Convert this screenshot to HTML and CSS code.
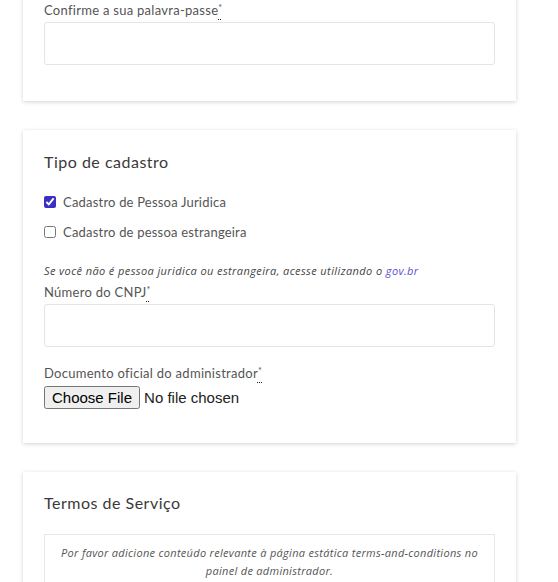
FILE: index.html
```html
<!DOCTYPE html>
<html lang="pt">
<head>
<meta charset="utf-8">
<link rel="stylesheet" href="styles.css">
</head>
<body>
<div class="page">
  <section class="card card-first">
    <div class="field">
      <label class="label">Confirme a sua palavra-passe<abbr title="obrigatório">*</abbr></label>
      <input class="text-input" type="password">
    </div>
  </section>

  <section class="card card-type">
    <h2 class="card-title">Tipo de cadastro</h2>
    <div class="checks">
      <label class="check"><input type="checkbox" checked> <span>Cadastro de Pessoa Juridica</span></label>
      <label class="check"><input type="checkbox"> <span>Cadastro de pessoa estrangeira</span></label>
    </div>
    <p class="note">Se você não é pessoa juridica ou estrangeira, acesse utilizando o <a href="#">gov.br</a></p>
    <div class="field">
      <label class="label">Número do CNPJ<abbr title="obrigatório">*</abbr></label>
      <input class="text-input" type="text">
    </div>
    <div class="field field-file">
      <label class="label">Documento oficial do administrador<abbr title="obrigatório">*</abbr></label>
      <input class="file-input" type="file">
    </div>
  </section>

  <section class="card card-terms">
    <h2 class="card-title">Termos de Serviço</h2>
    <div class="terms">
      <p>Por favor adicione conteúdo relevante à página estática terms-and-conditions no painel de administrador.</p>
    </div>
  </section>
</div>
</body>
</html>
```

FILE: styles.css
```css
html, body {
  margin: 0;
  padding: 0;
  background: #ffffff;
}
body {
  font-family: "Lato", "Open Sans", sans-serif;
  color: #555555;
  overflow: hidden;
}
.page {
  padding: 0 42px 0 23px;
  display: flex;
  flex-direction: column;
  gap: 29px;
}
.card {
  background: #fff;
  box-shadow: 0 1px 4px rgba(0, 0, 0, 0.18);
  padding: 21px 21px 36px;
}
.card-first {
  margin-top: -22px;
}
.card-type {
  padding-bottom: 34px;
}
.card-terms {
  padding-top: 20px;
}
.card-title {
  margin: 0;
  font-size: 16px;
  font-weight: 400;
  letter-spacing: 0.5px;
  color: #3a3a3a;
  line-height: 22px;
}
.field {
  display: flex;
  flex-direction: column;
}
.label {
  font-size: 13px;
  line-height: 17px;
  letter-spacing: 0.28px;
  color: #555;
}
.label abbr {
  font-size: 9px;
  vertical-align: 4px;
  text-decoration: underline dotted;
  text-decoration-color: #222;
  text-underline-offset: 8px;
  cursor: help;
}
.text-input {
  margin-top: 3px;
  height: 43px;
  box-sizing: border-box;
  border: 1px solid #e4e4e4;
  border-radius: 3px;
  background: #fff;
}
.checks {
  margin-top: 21px;
  display: flex;
  flex-direction: column;
  gap: 14px;
}
.check {
  display: flex;
  align-items: center;
  gap: 7px;
  font-size: 13px;
  line-height: 16px;
  letter-spacing: 0.2px;
  color: #555;
}
.check input {
  margin: 0;
  width: 12px;
  height: 12px;
  accent-color: #3c2fc4;
}
.note {
  margin: 24px 0 4px;
  font-family: "Open Sans", "Lato", sans-serif;
  font-size: 11px;
  line-height: 13px;
  font-style: italic;
  letter-spacing: 0.4px;
  color: #444;
}
.note a {
  color: #5a4fd1;
  text-decoration: none;
}
.field-file {
  margin-top: 15px;
}
.file-input {
  margin-top: 4px;
  font-family: "Liberation Sans", Arial, sans-serif;
  font-size: 15px;
  color: #222;
}
.terms {
  margin-top: 20px;
  border: 1px solid #e6e6e6;
  padding: 9px 14px 40px;
}
.terms p {
  margin: 0;
  text-align: center;
  font-family: "Open Sans", "Lato", sans-serif;
  font-size: 11px;
  line-height: 18px;
  font-style: italic;
  letter-spacing: 0.3px;
  color: #555;
}
```
